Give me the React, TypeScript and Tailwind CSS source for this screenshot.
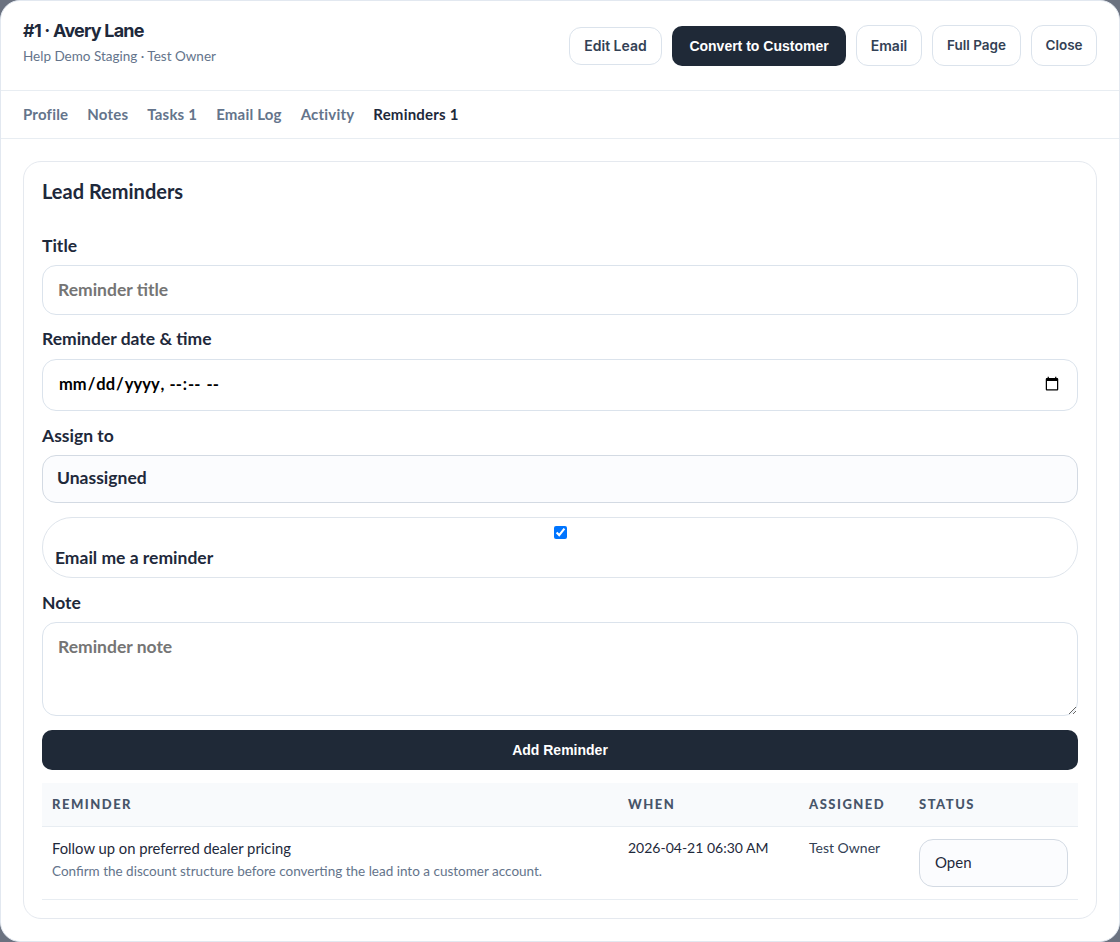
import React from 'react';

const sans = "font-['Lato','Noto_Sans',sans-serif]";

const OutlineButton = ({ label, className = '' }: { label: string; className?: string }) => (
  <button className={`rounded-xl border border-[#dbe3ec] bg-white font-['Inter',sans-serif] font-semibold text-[#334155] ${className}`}>
    {label}
  </button>
);

const tabs = ['Profile', 'Notes', 'Tasks 1', 'Email Log', 'Activity', 'Reminders 1'];
const fieldLabel = 'block text-[17.5px] font-bold leading-5 text-[#1e293b]';

export default function App() {
  return (
    <div className={`h-[942px] w-[1120px] overflow-hidden bg-[#6b7280] ${sans}`}>
      <div className="flex h-[942px] flex-col rounded-[20px] border border-[#e2e8f0] bg-white">
        <header className="flex h-[90px] shrink-0 items-start justify-between border-b border-[#e8edf2] px-[22px]">
          <div className="pt-[19px]">
            <h1 className="font-['Inter',sans-serif] text-lg font-bold leading-[22px] tracking-[-0.8px] text-[#1e293b]">#1 · Avery Lane</h1>
            <p className="mt-[5px] text-[13.5px] leading-[18px] text-[#64748b]">Help Demo Staging · Test Owner</p>
          </div>
          <div className="flex items-center gap-[10px] pt-[24px]">
            <OutlineButton label="Edit Lead" className="h-[38px] w-[93px] text-sm" />
            <button className="h-10 w-[174px] rounded-[10px] bg-[#1f2937] font-['Liberation_Sans',sans-serif] text-sm font-bold text-white">Convert to Customer</button>
            <OutlineButton label="Email" className="h-[41px] w-[66px] text-sm" />
            <OutlineButton label="Full Page" className="h-[41px] w-[89px] text-[13.5px]" />
            <OutlineButton label="Close" className="h-[41px] w-[66px] text-[13.5px]" />
          </div>
        </header>

        <nav className="flex h-12 shrink-0 items-center gap-[19px] border-b border-[#e8edf2] px-[22px] pb-px">
          {tabs.map((t) => (
            <span key={t} className={`text-[15px] font-bold tracking-[0.2px] ${t === 'Reminders 1' ? 'text-[#1e293b]' : 'text-[#64748b]'}`}>{t}</span>
          ))}
        </nav>

        <main className="px-[22px] pt-[22px]">
          <section className="h-[758px] rounded-[18px] border border-[#e5e9ef] px-[18px] pt-[17px]">
            <h2 className="text-xl font-bold leading-6 text-[#1e293b]">Lead Reminders</h2>

            <label className={`${fieldLabel} mt-[32px] pt-px`}>Title</label>
            <input
              placeholder="Reminder title"
              className="mt-[9px] block h-[50px] w-full rounded-[14px] border border-[#dbe3ec] px-[15px] pb-[2px] text-[17.5px] font-bold placeholder:text-[#757575]"
            />

            <label className={`${fieldLabel} mt-[14px]`}>Reminder date &amp; time</label>
            <input
              type="datetime-local"
              className="mt-[10px] block h-[52px] w-full rounded-[14px] border border-[#dbe3ec] px-[15px] pb-px text-[16.5px] font-bold text-black"
            />

            <label className={`${fieldLabel} mt-[15px]`}>Assign to</label>
            <select className="mt-[9px] block h-12 w-full appearance-none rounded-[14px] border border-[#d3dae3] bg-[#fbfcfe] px-[14px] pb-px text-[17.5px] font-bold text-[#1e293b]">
              <option>Unassigned</option>
            </select>

            <div className="mt-[14px] flex h-[61px] flex-col rounded-[30px] border border-[#dfe5ec] px-3 pt-2">
              <input type="checkbox" defaultChecked className="mx-auto block size-[13px]" />
              <span className="mt-[9px] text-[17.5px] font-bold leading-5 text-[#1e293b]">Email me a reminder</span>
            </div>

            <label className={`${fieldLabel} mt-[14px] pt-px`}>Note</label>
            <textarea
              placeholder="Reminder note"
              className="mt-[9px] block h-[94px] w-full rounded-[14px] border border-[#dbe3ec] px-[15px] pb-[13px] pt-[11px] text-[17.5px] font-bold placeholder:text-[#757575]"
            />

            <button className="mt-[14px] block h-10 w-full rounded-[10px] bg-[#1f2937] font-['Liberation_Sans',sans-serif] text-sm font-bold text-white">Add Reminder</button>

            <table className="mt-[13px] w-full table-fixed border-collapse text-left">
              <colgroup>
                <col className="w-[576px]" />
                <col className="w-[181px]" />
                <col className="w-[110px]" />
                <col className="w-[169px]" />
              </colgroup>
              <thead>
                <tr className="h-[43px] border-b border-[#e8edf2] bg-[#f8fafc] text-[13px] tracking-[1.5px] text-[#475569]">
                  <th className="px-[10px] font-black">REMINDER</th>
                  <th className="px-[10px] font-black">WHEN</th>
                  <th className="px-[10px] font-black">ASSIGNED</th>
                  <th className="px-[10px] font-black">STATUS</th>
                </tr>
              </thead>
              <tbody>
                <tr className="h-[73px] border-b border-[#e8edf2] align-top text-sm text-[#1e293b]">
                  <td className="px-[10px] pt-[11px]">
                    <div className="text-[14.8px] leading-5">Follow up on preferred dealer pricing</div>
                    <div className="mt-[3px] text-[13.5px] leading-5 text-[#64748b]">Confirm the discount structure before converting the lead into a customer account.</div>
                  </td>
                  <td className="px-[10px] pt-[11px] leading-5">2026-04-21 06:30 AM</td>
                  <td className="px-[10px] pt-[11px] leading-5 text-[#334155]">Test Owner</td>
                  <td className="px-[10px] pt-3">
                    <select className="block h-12 w-full appearance-none rounded-[14px] border border-[#d3dae3] bg-[#fbfcfe] px-[15px] text-[15px] text-[#1e293b]">
                      <option>Open</option>
                    </select>
                  </td>
                </tr>
              </tbody>
            </table>
          </section>
        </main>
      </div>
    </div>
  );
}
